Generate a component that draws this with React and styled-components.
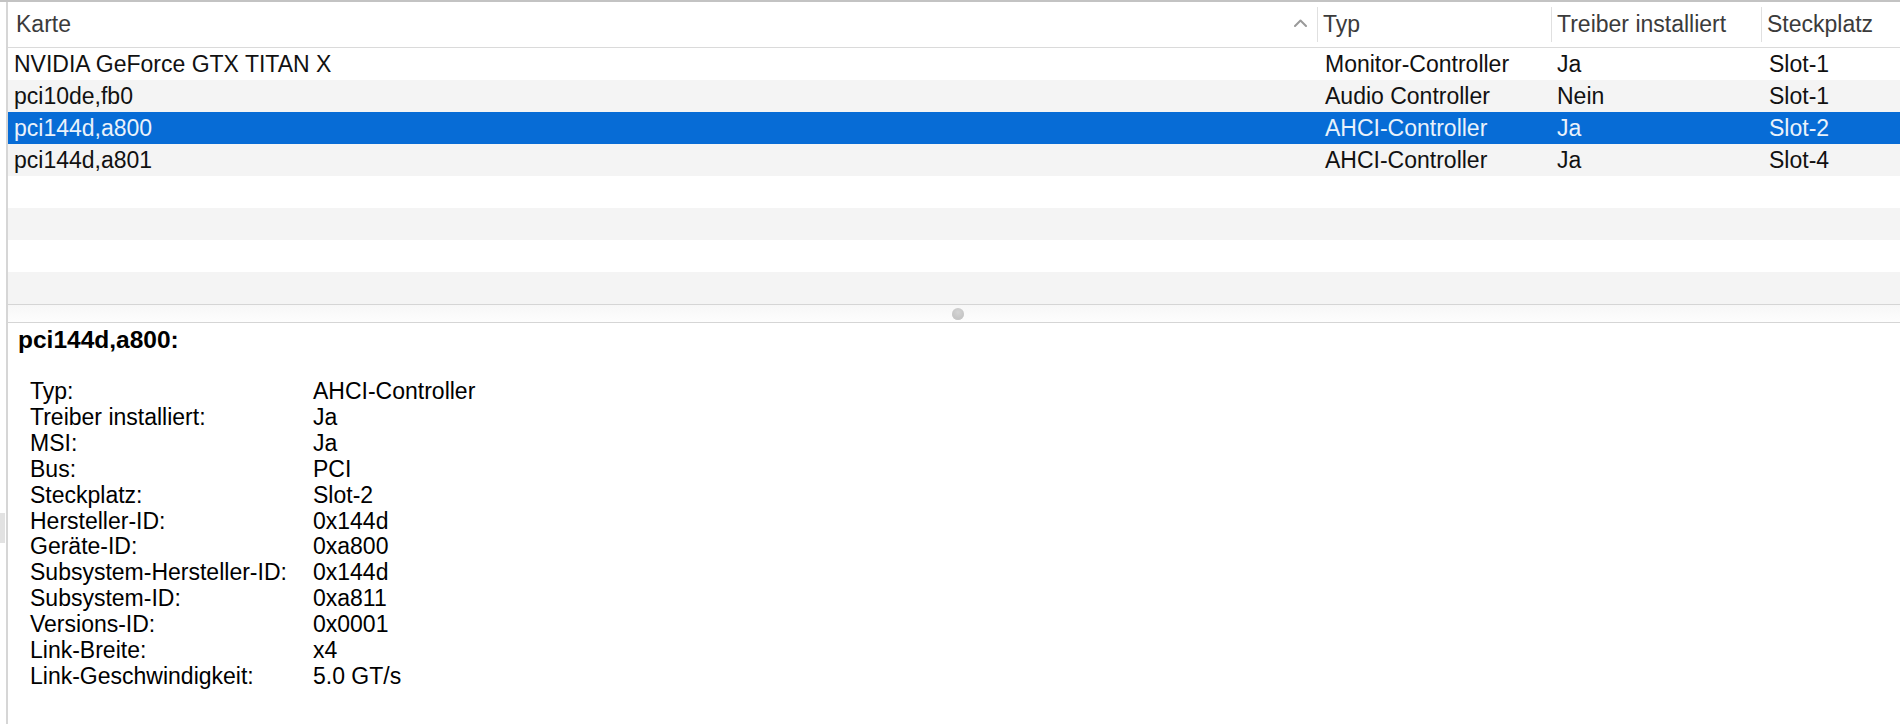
import React from 'react';
import styled, { createGlobalStyle } from 'styled-components';

const GlobalStyle = createGlobalStyle`
  html, body {
    margin: 0;
    padding: 0;
    background: #fff;
  }
  body {
    font-family: "Liberation Sans", Arial, sans-serif;
    -webkit-font-smoothing: antialiased;
  }
`;

const COLUMNS = '1309px 234px 210px 1fr';

const devices = [
  { card: 'NVIDIA GeForce GTX TITAN X', type: 'Monitor-Controller', driver: 'Ja', slot: 'Slot-1' },
  { card: 'pci10de,fb0', type: 'Audio Controller', driver: 'Nein', slot: 'Slot-1' },
  { card: 'pci144d,a800', type: 'AHCI-Controller', driver: 'Ja', slot: 'Slot-2' },
  { card: 'pci144d,a801', type: 'AHCI-Controller', driver: 'Ja', slot: 'Slot-4' },
];

const details = [
  ['Typ:', 'AHCI-Controller'],
  ['Treiber installiert:', 'Ja'],
  ['MSI:', 'Ja'],
  ['Bus:', 'PCI'],
  ['Steckplatz:', 'Slot-2'],
  ['Hersteller-ID:', '0x144d'],
  ['Geräte-ID:', '0xa800'],
  ['Subsystem-Hersteller-ID:', '0x144d'],
  ['Subsystem-ID:', '0xa811'],
  ['Versions-ID:', '0x0001'],
  ['Link-Breite:', 'x4'],
  ['Link-Geschwindigkeit:', '5.0 GT/s'],
];

const SELECTED = 2;
const TOTAL_ROWS = 8;

const Window = styled.div`
  display: flex;
  height: 722px;
  border-top: 2px solid #c3c3c3;
  overflow: hidden;
`;

const Gutter = styled.div`
  width: 6px;
  flex: none;
  display: flex;
  flex-direction: column;
`;

const GutterTab = styled.div`
  margin-top: 511px;
  width: 5px;
  height: 30px;
  background: #e2e2e2;
`;

const Main = styled.div`
  flex: 1;
  display: flex;
  flex-direction: column;
  border-left: 2px solid #d6d6d6;
  font-size: 23px;
`;

const Table = styled.div`
  display: flex;
  flex-direction: column;
`;

const HeaderRow = styled.div`
  display: grid;
  grid-template-columns: ${COLUMNS};
  height: 45px;
  border-bottom: 1px solid #dadada;
  color: #3b3b3b;
`;

const HeaderCell = styled.div`
  display: flex;
  align-items: center;
  gap: ${(p) => (p.$divided ? '5px' : '0')};
  padding-left: ${(p) => (p.$divided ? '0' : '8px')};
  padding-right: ${(p) => (p.$sortable ? '10px' : '0')};
  padding-bottom: 1px;
  justify-content: ${(p) => (p.$sortable ? 'space-between' : 'flex-start')};
  white-space: nowrap;
`;

const Divider = styled.span`
  width: 1px;
  height: 35px;
  background: #e0e0e0;
  flex: none;
`;

const ArrowWrap = styled.span`
  display: flex;
  margin-bottom: 2px;
`;

const SortArrow = () => (
  <ArrowWrap>
    <svg width="13" height="8" viewBox="0 0 13 8" fill="none">
      <path d="M1 7 L6.5 1.5 L12 7" stroke="#9a9a9a" strokeWidth="2" strokeLinecap="round" strokeLinejoin="round" />
    </svg>
  </ArrowWrap>
);

const Row = styled.div`
  display: grid;
  grid-template-columns: ${COLUMNS};
  height: 32px;
  line-height: 32px;
  background: ${(p) => (p.$selected ? '#076cd6' : p.$odd ? '#f4f4f4' : '#fff')};
  color: ${(p) => (p.$selected ? '#eaf2fb' : '#111')};
`;

const Cell = styled.div`
  padding-left: ${(p) => p.$pad}px;
  white-space: nowrap;
  overflow: hidden;
`;

const Splitter = styled.div`
  height: 17px;
  border-top: 1px solid #d5d5d5;
  border-bottom: 1px solid #d5d5d5;
  background: linear-gradient(#f7f7f7, #fdfdfd);
  display: flex;
  align-items: center;
  justify-content: center;
`;

const Dimple = styled.span`
  width: 12px;
  height: 12px;
  border-radius: 50%;
  background: radial-gradient(circle at 50% 35%, #d4d4d4, #bdbdbd);
  box-shadow: inset 0 -1px 0 #c9c9c9;
  margin-left: 8px;
`;

const DetailPane = styled.div`
  flex: 1;
  padding: 3px 0 0 10px;
  color: #000;
`;

const Title = styled.div`
  font-size: 24.5px;
  font-weight: bold;
  line-height: 28px;
`;

const PropertyGrid = styled.div`
  display: grid;
  grid-template-columns: 283px 1fr;
  line-height: 25.9px;
  margin: 25px 0 0 12px;
  white-space: nowrap;
`;

export default function App() {
  const rows = Array.from({ length: TOTAL_ROWS }, (_, i) => devices[i] || null);

  return (
    <>
      <GlobalStyle />
      <Window>
        <Gutter>
          <GutterTab />
        </Gutter>
        <Main>
          <Table>
            <HeaderRow>
              <HeaderCell $sortable>
                <span>Karte</span>
                <SortArrow />
              </HeaderCell>
              <HeaderCell $divided>
                <Divider />
                <span>Typ</span>
              </HeaderCell>
              <HeaderCell $divided>
                <Divider />
                <span>Treiber installiert</span>
              </HeaderCell>
              <HeaderCell $divided>
                <Divider />
                <span>Steckplatz</span>
              </HeaderCell>
            </HeaderRow>
            {rows.map((d, i) => (
              <Row key={i} $odd={i % 2 === 1} $selected={i === SELECTED}>
                <Cell $pad={6}>{d?.card}</Cell>
                <Cell $pad={8}>{d?.type}</Cell>
                <Cell $pad={6}>{d?.driver}</Cell>
                <Cell $pad={8}>{d?.slot}</Cell>
              </Row>
            ))}
          </Table>
          <Splitter>
            <Dimple />
          </Splitter>
          <DetailPane>
            <Title>pci144d,a800:</Title>
            <PropertyGrid>
              {details.map(([label, value]) => (
                <React.Fragment key={label}>
                  <span>{label}</span>
                  <span>{value}</span>
                </React.Fragment>
              ))}
            </PropertyGrid>
          </DetailPane>
        </Main>
      </Window>
    </>
  );
}
